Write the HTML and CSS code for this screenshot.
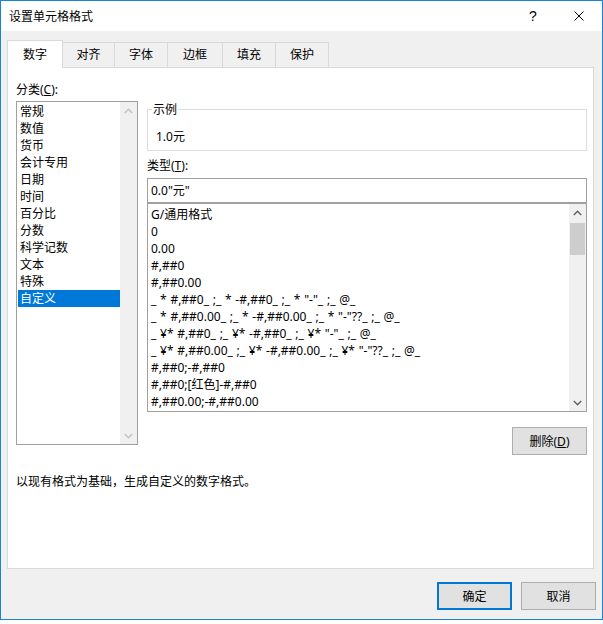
FILE: index.html
```html
<!DOCTYPE html>
<html lang="zh-CN">
<head>
<meta charset="utf-8">
<title>设置单元格格式</title>
<link rel="stylesheet" href="styles.css">
</head>
<body>
<div class="window">
  <div class="titlebar">
    <span class="title">设置单元格格式</span>
    <span class="tb-btn help">?</span>
    <span class="tb-btn close"><svg width="10" height="10" viewBox="0 0 10 10"><path d="M0.5 0.5L9.5 9.5M9.5 0.5L0.5 9.5" stroke="#000" stroke-width="1" fill="none"/></svg></span>
  </div>
  <div class="client">
    <div class="tabs">
      <div class="tab active">数字</div>
      <div class="tab w52">对齐</div>
      <div class="tab w53">字体</div>
      <div class="tab w55">边框</div>
      <div class="tab w53">填充</div>
      <div class="tab w53">保护</div>
    </div>
    <div class="panel">
      <div class="cols">
        <div class="left">
          <div class="label">分类(<u>C</u>):</div>
          <div class="listbox cat">
            <ul class="items">
              <li>常规</li>
              <li>数值</li>
              <li>货币</li>
              <li>会计专用</li>
              <li>日期</li>
              <li>时间</li>
              <li>百分比</li>
              <li>分数</li>
              <li>科学记数</li>
              <li>文本</li>
              <li>特殊</li>
              <li class="selected">自定义</li>
            </ul>
            <div class="vscroll disabled">
              <span class="arrow"><svg width="9" height="6" viewBox="0 0 9 6"><path d="M0.8 5L4.5 1.3L8.2 5" stroke="#c2c2c2" stroke-width="1.4" fill="none"/></svg></span>
              <span class="track"></span>
              <span class="arrow"><svg width="9" height="6" viewBox="0 0 9 6"><path d="M0.8 1L4.5 4.7L8.2 1" stroke="#c2c2c2" stroke-width="1.4" fill="none"/></svg></span>
            </div>
          </div>
        </div>
        <div class="right">
          <fieldset class="sample">
            <legend>示例</legend>
            <div class="sample-value">1.0元</div>
          </fieldset>
          <div class="label type-label">类型(<u>T</u>):</div>
          <div class="input">0.0"元"</div>
          <div class="listbox types">
            <ul class="items">
              <li>G/通用格式</li>
              <li>0</li>
              <li>0.00</li>
              <li>#,##0</li>
              <li>#,##0.00</li>
              <li>_ * #,##0_ ;_ * -#,##0_ ;_ * "-"_ ;_ @_</li>
              <li>_ * #,##0.00_ ;_ * -#,##0.00_ ;_ * "-"??_ ;_ @_</li>
              <li>_ ¥* #,##0_ ;_ ¥* -#,##0_ ;_ ¥* "-"_ ;_ @_</li>
              <li>_ ¥* #,##0.00_ ;_ ¥* -#,##0.00_ ;_ ¥* "-"??_ ;_ @_</li>
              <li>#,##0;-#,##0</li>
              <li>#,##0;[红色]-#,##0</li>
              <li>#,##0.00;-#,##0.00</li>
            </ul>
            <div class="vscroll">
              <span class="arrow"><svg width="9" height="6" viewBox="0 0 9 6"><path d="M0.8 5L4.5 1.3L8.2 5" stroke="#606060" stroke-width="1.4" fill="none"/></svg></span>
              <span class="track"><span class="thumb"></span></span>
              <span class="arrow"><svg width="9" height="6" viewBox="0 0 9 6"><path d="M0.8 1L4.5 4.7L8.2 1" stroke="#606060" stroke-width="1.4" fill="none"/></svg></span>
            </div>
          </div>
          <div class="btnrow">
            <button class="btn">删除(<u>D</u>)</button>
          </div>
        </div>
      </div>
      <p class="desc">以现有格式为基础，生成自定义的数字格式。</p>
    </div>
    <div class="footer">
      <button class="btn default">确定</button>
      <button class="btn">取消</button>
    </div>
  </div>
</div>
</body>
</html>
```

FILE: styles.css
```css
* {
  box-sizing: border-box;
}

html, body {
  margin: 0;
  padding: 0;
  background: #ffffff;
}

body {
  font-family: "Noto Sans", "Noto Sans CJK SC", sans-serif;
  font-size: 12px;
  line-height: 17px;
  color: #000000;
}

.window {
  width: 603px;
  height: 620px;
  border: 1px solid #1883d7;
  display: flex;
  flex-direction: column;
  background: #f0f0f0;
}

.titlebar {
  height: 30px;
  background: #ffffff;
  display: flex;
  align-items: center;
  flex: none;
}

.title {
  flex: 1;
  padding-left: 8px;
  padding-top: 1px;
}

.tb-btn {
  width: 46px;
  height: 30px;
  display: flex;
  align-items: center;
  justify-content: center;
}

.help {
  font-size: 14px;
  font-family: "Liberation Sans", sans-serif;
  color: #000000;
  padding-top: 1px;
}

.close svg {
  display: block;
}

.client {
  flex: 1;
  display: flex;
  flex-direction: column;
  padding: 9px 6px 0 6px;
}

.tabs {
  display: flex;
  align-items: flex-end;
  height: 27px;
  position: relative;
  z-index: 2;
}

.tab {
  height: 25px;
  border-top: 1px solid #d9d9d9;
  border-right: 1px solid #d9d9d9;
  background: #f0f0f0;
  text-align: center;
  padding-top: 3px;
}

.tab.active {
  width: 56px;
  height: 28px;
  margin-bottom: -1px;
  background: #ffffff;
  border-left: 1px solid #d9d9d9;
  padding-top: 5px;
}

.w52 { width: 52px; }
.w53 { width: 53px; }
.w55 { width: 55px; }

.panel {
  width: 587px;
  height: 502px;
  background: #ffffff;
  border: 1px solid #d9d9d9;
  padding: 13px 8px 0 8px;
  flex: none;
}

.cols {
  display: grid;
  grid-template-columns: 122px 440px;
  column-gap: 9px;
  align-items: start;
}

.label {
  height: 17px;
  white-space: nowrap;
}

u {
  text-decoration: underline;
  text-underline-offset: 1px;
}

.listbox {
  display: flex;
  border: 1px solid #a0a0a0;
  background: #ffffff;
  overflow: hidden;
}

.listbox .items {
  list-style: none;
  margin: 0;
  flex: 1;
  min-width: 0;
}

.listbox li {
  height: 17px;
  white-space: pre;
}

.cat {
  margin-top: 3px;
  height: 344px;
}

.cat .items {
  padding: 1px 0 0 1px;
}

.cat li {
  padding-left: 2px;
}

.cat li.selected {
  background: #0078d7;
  color: #ffffff;
}

.vscroll {
  width: 17px;
  flex: none;
  background: #f0f0f0;
  display: flex;
  flex-direction: column;
}

.vscroll .arrow {
  height: 17px;
  flex: none;
  display: flex;
  align-items: center;
  justify-content: center;
}

.vscroll .arrow svg {
  display: block;
}

.vscroll .track {
  flex: 1;
  display: block;
  padding: 2px 1px 0 1px;
}

.vscroll .thumb {
  display: block;
  height: 32px;
  background: #cdcdcd;
}

.sample {
  margin: 20px 0 0 0;
  padding: 0 8px 5px 4px;
  border: 1px solid #dcdcdc;
  min-width: 0;
}

.sample legend {
  padding: 0 1px;
  line-height: 17px;
}

.sample-value {
  margin: 10px 0 0 4px;
}

.type-label {
  margin-top: 6px;
}

.input {
  margin-top: 4px;
  height: 25px;
  border: 1px solid #a0a0a0;
  padding-left: 3px;
  line-height: 23px;
  background: #ffffff;
}

.types {
  height: 209px;
}

.types .items {
  padding: 2px 0 0 3px;
  word-spacing: 0.6px;
}

.btnrow {
  display: flex;
  justify-content: flex-end;
  margin-top: 15px;
}

.btn {
  width: 75px;
  height: 28px;
  background: #e1e1e1;
  border: 1px solid #adadad;
  font: inherit;
  color: #000000;
  padding: 0;
  margin: 0;
  line-height: 17px;
}

.btn.default {
  border: 2px solid #0078d7;
}

.desc {
  margin: 18px 0 0 0;
}

.footer {
  display: flex;
  justify-content: flex-end;
  gap: 9px;
  margin-top: 13px;
}
```
